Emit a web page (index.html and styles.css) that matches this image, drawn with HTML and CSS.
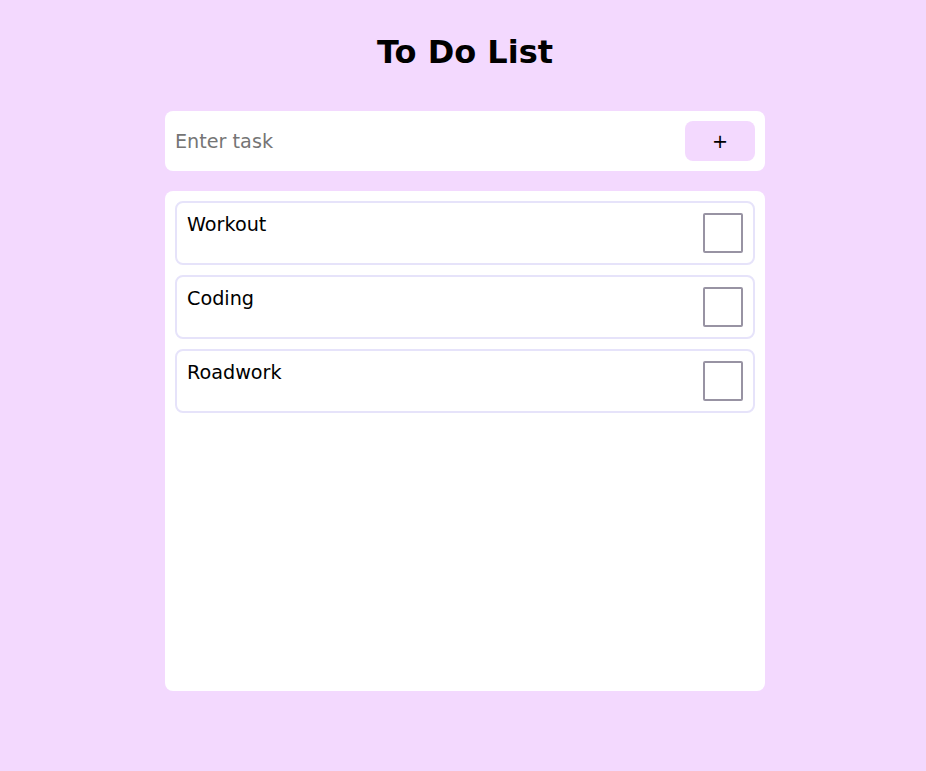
FILE: index.html
```html
<!DOCTYPE html>
<html>
<head>
<meta charset="utf-8">
<link rel="stylesheet" href="styles.css">
</head>
<body>
<h1 class="title">To Do List</h1>
<main class="wrap">
  <form class="entry">
    <input class="entry-input" type="text" placeholder="Enter task">
    <button class="entry-btn" type="button">+</button>
  </form>
  <section class="list">
    <div class="item"><span class="item-text">Workout</span><span class="check"></span></div>
    <div class="item"><span class="item-text">Coding</span><span class="check"></span></div>
    <div class="item"><span class="item-text">Roadwork</span><span class="check"></span></div>
  </section>
</main>
</body>
</html>
```
FILE: styles.css
```css
* { box-sizing: border-box; }
html, body {
  margin: 0;
  background: #f3d9fe;
  font-family: "DejaVu Sans", sans-serif;
  height: 100%;
}
body { padding-left: 4px; }
.title {
  margin: 34px 0 0;
  font-size: 32px;
  line-height: 37px;
  font-weight: bold;
  text-align: center;
  color: #000;
}
.wrap {
  width: 600px;
  margin: 40px auto 0;
  display: flex;
  flex-direction: column;
  gap: 20px;
}
.entry {
  margin: 0;
  background: #fff;
  border-radius: 8px;
  height: 60px;
  padding: 10px;
  display: flex;
  align-items: center;
  gap: 10px;
}
.entry-input {
  flex: 1;
  border: none;
  outline: none;
  font-family: "DejaVu Sans", sans-serif;
  font-size: 19.2px;
  padding: 0;
  color: #000;
  background: transparent;
}
.entry-input::placeholder { color: #757575; }
.entry-btn {
  width: 70px;
  height: 40px;
  border: none;
  border-radius: 8px;
  background: #f3d9fe;
  font-family: "DejaVu Sans", sans-serif;
  font-size: 19.2px;
  color: #000;
  padding: 0;
}
.list {
  background: #fff;
  border-radius: 8px;
  height: 500px;
  padding: 10px;
  display: flex;
  flex-direction: column;
  gap: 10px;
}
.item {
  border: 2px solid #e6e3fa;
  border-radius: 8px;
  padding: 10px;
  display: flex;
  justify-content: space-between;
  align-items: flex-start;
}
.item-text {
  font-size: 19.2px;
  color: #000;
}
.check {
  width: 40px;
  height: 40px;
  border: 2px solid #9893a3;
  border-radius: 2px;
  flex: none;
}
```
